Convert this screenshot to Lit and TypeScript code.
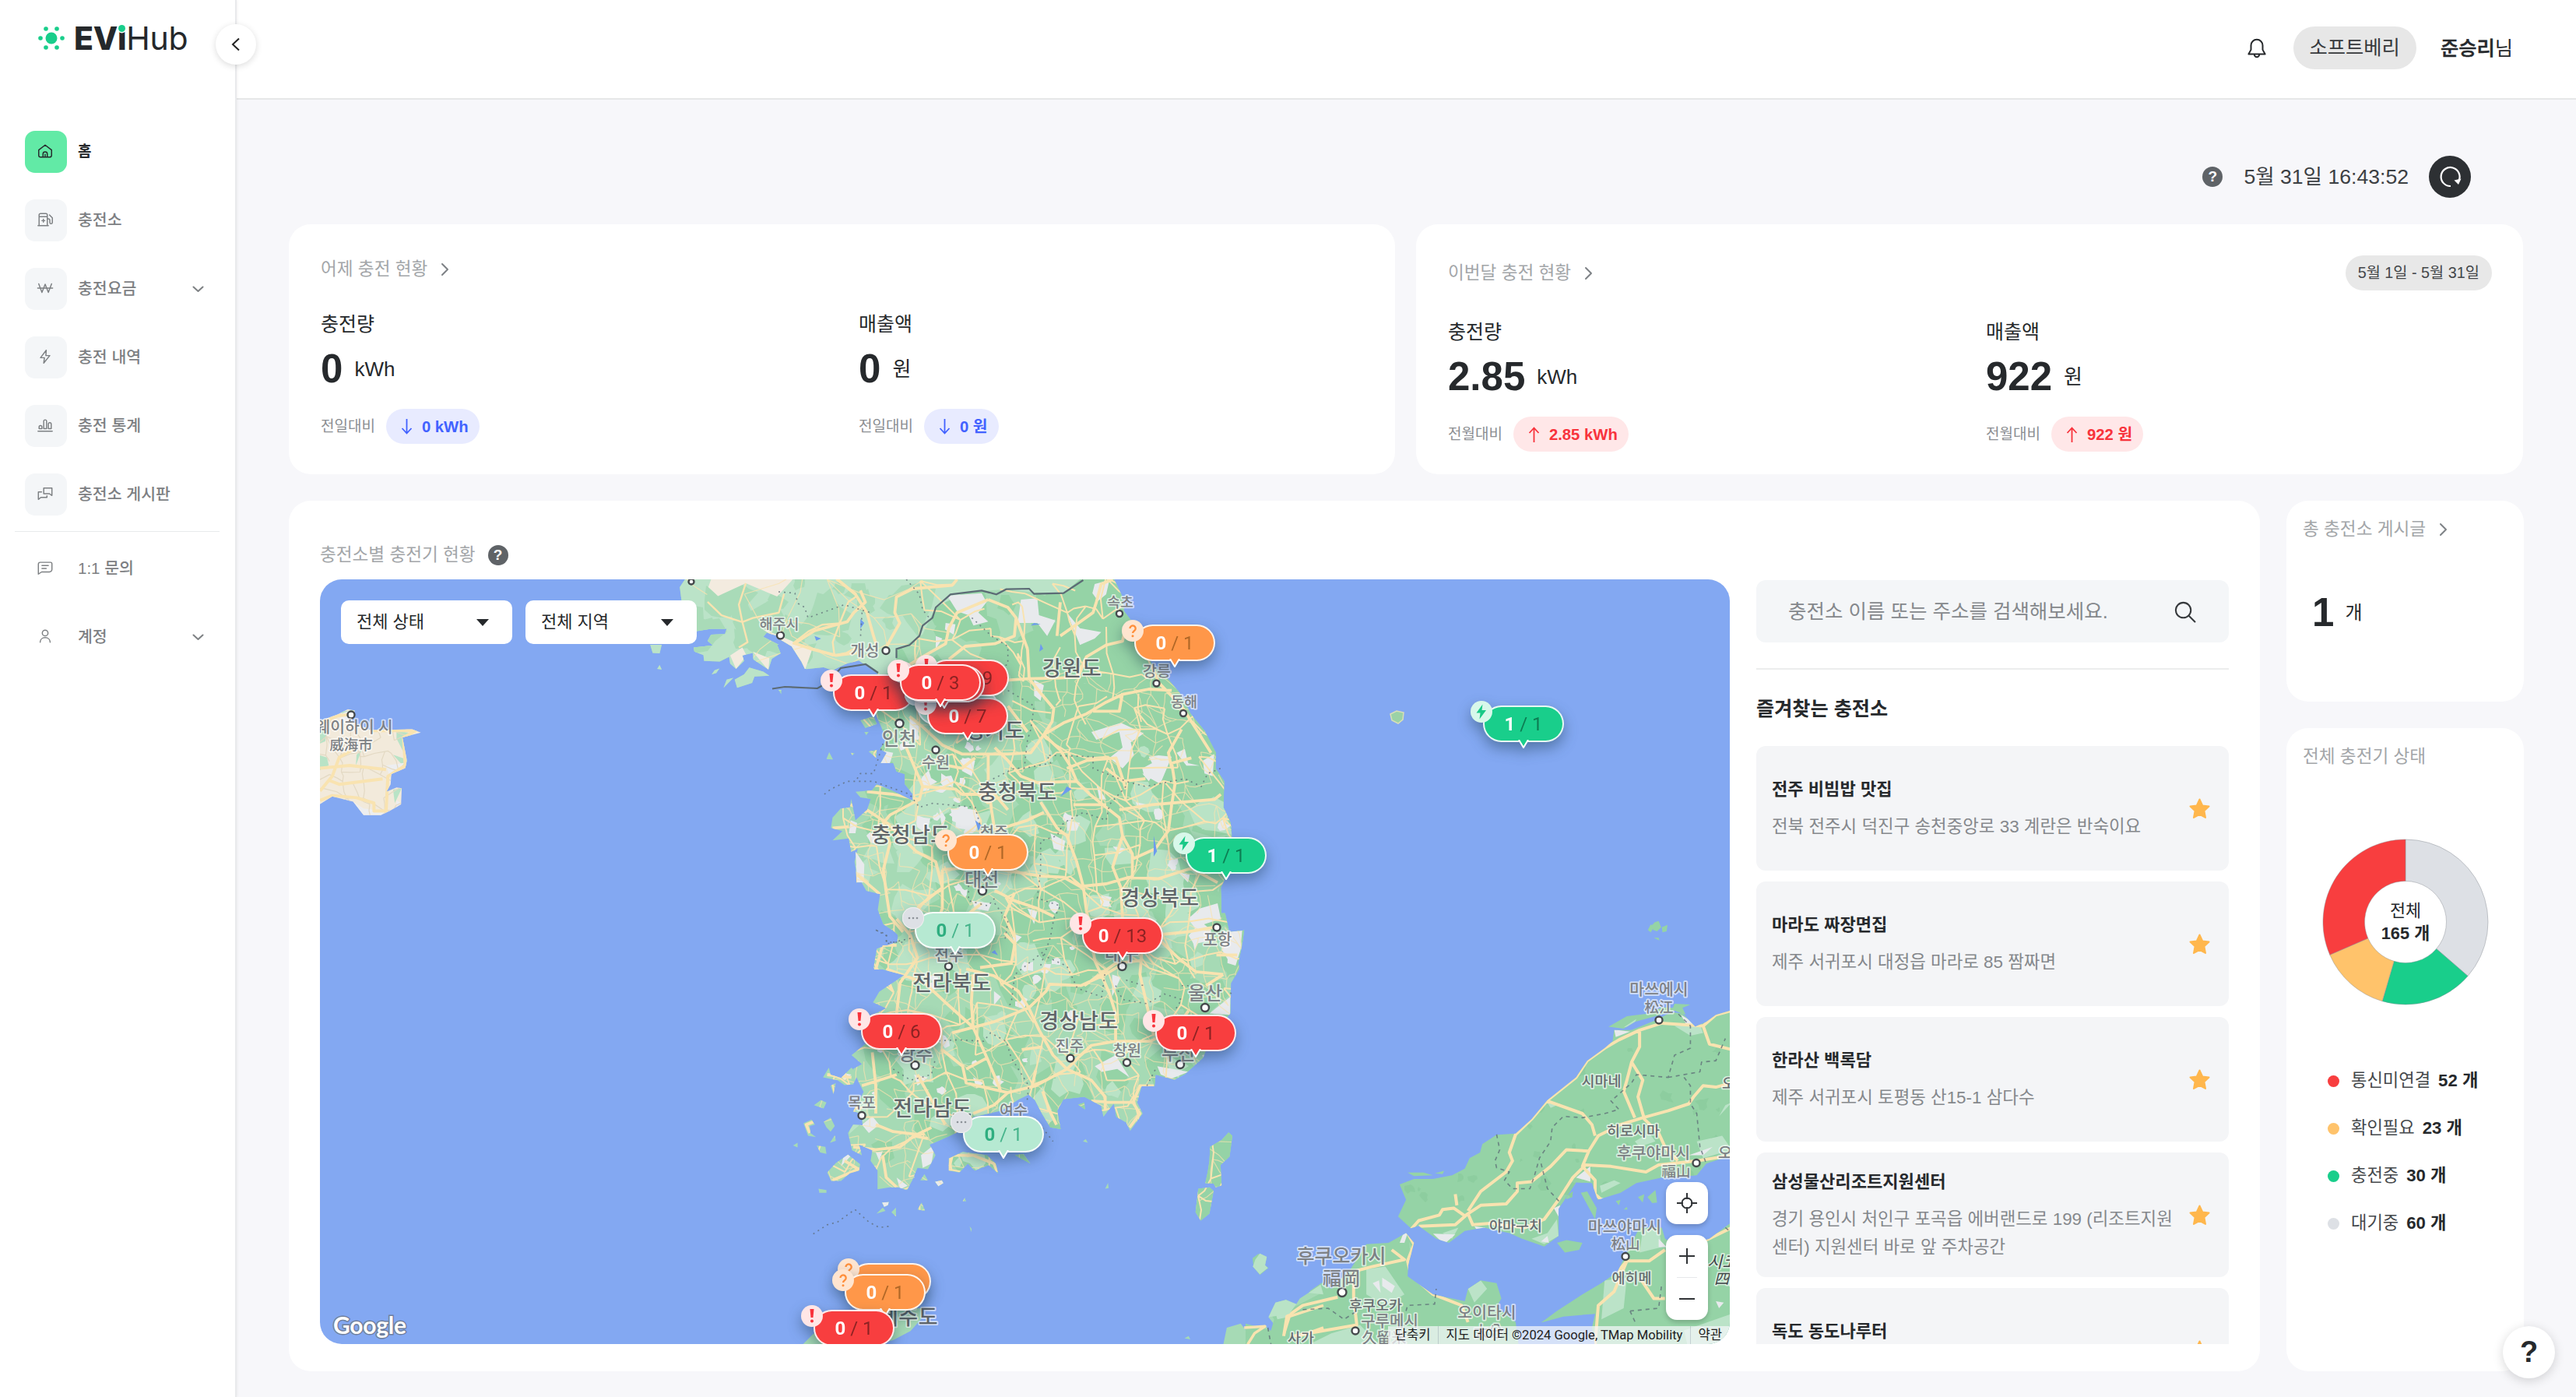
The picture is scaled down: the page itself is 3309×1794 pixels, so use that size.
import { LitElement, html, css, svg } from "lit";
import { customElement } from "lit/decorators.js";

const stroke = (d: string, vb = "0 0 24 24", w = 1.6) =>
  html`<svg class="ico" viewBox=${vb} fill="none" stroke="currentColor" stroke-width=${w} stroke-linecap="round" stroke-linejoin="round"><path d=${d} /></svg>`;

const I = {
  home: "M3 10.500L12 3.500l9 7V18a2.500 2.500 0 0 1-2.500 2.500H5.500A2.500 2.500 0 0 1 3 18zM9 20.500V16a3 3 0 0 1 6 0v4.500M12 16.500v4",
  station: "M3.500 20.500V5.500a2 2 0 0 1 2-2H13a2 2 0 0 1 2 2v15M2 20.500h14.500M3.500 8H15M9.500 11.500v4M7.500 13.500h4M15 11h1.500a2 2 0 0 1 2 2v3a1.800 1.800 0 0 0 3.600 0V9.500L18 5.500",
  won: "M3 6l4.500 12L12 6.500 16.500 18 21 6M1.500 12h21",
  bolt: "M13.500 3L5.500 13.500h5.500L10 21l8.500-10.500H13z",
  stats: "M2 20.500h20M3.500 17v-2.500a2 2 0 0 1 4 0V17zM10 17V6.500a2 2 0 0 1 4 0V17zM16.500 17v-6.500a2 2 0 0 1 4 0V17z",
  board: "M10 4h11.500v10.500l-3.500-2.500h-8zM7 9.500H2.500V20l3.500-2.800h8.500V15",
  chat: "M5 4.500h14.500a2 2 0 0 1 2 2v8a3.500 3.500 0 0 1-3.500 3.500H7l-4.500 3V7A2.500 2.500 0 0 1 5 4.500zM7.500 9h9M7.500 13h6",
  user: "M12 11.500a4 4 0 1 0 0-8 4 4 0 0 0 0 8zM5 20.500c0-4 3-6.500 7-6.500s7 2.500 7 6.500",
};

const NAV = [
  { icon: I.home, label: "홈", active: true },
  { icon: I.station, label: "충전소" },
  { icon: I.won, label: "충전요금", more: true },
  { icon: I.bolt, label: "충전 내역" },
  { icon: I.stats, label: "충전 통계" },
  { icon: I.board, label: "충전소 게시판" },
];
const NAV2 = [
  { icon: I.chat, label: "1:1 문의" },
  { icon: I.user, label: "계정", more: true },
];

const FAVORITES = [
  ["전주 비빔밥 맛집", "전북 전주시 덕진구 송천중앙로 33 계란은 반숙이요"],
  ["마라도 짜장면집", "제주 서귀포시 대정읍 마라로 85 짬짜면"],
  ["한라산 백록담", "제주 서귀포시 토평동 산15-1 삼다수"],
  ["삼성물산리조트지원센터", "경기 용인시 처인구 포곡읍 에버랜드로 199 (리조트지원센터) 지원센터 바로 앞 주차공간"],
  ["독도 동도나루터", ""],
];

const STATUS = [
  { label: "통신미연결", count: 52, color: "#f83e3f" },
  { label: "확인필요", count: 23, color: "#ffc36b" },
  { label: "충전중", count: 30, color: "#19ce8b" },
  { label: "대기중", count: 60, color: "#dde0e5" },
];

type Kind = "red" | "orange" | "green" | "mint";
const MARKERS: [number, number, Kind, string, string][] = [
  [1457, 802, "orange", "0", "1"],
  [1905, 906, "green", "1", "1"],
  [1070, 866, "red", "0", "1"],
  [1178, 884, "mint", "0", "1"],
  [1191, 896, "red", "0", "7"],
  [1192, 847, "red", "0", "39"],
  [1161, 855, "red", "0", "2"],
  [1156, 853, "red", "0", "3"],
  [1217, 1071, "orange", "0", "1"],
  [1523, 1075, "green", "1", "1"],
  [1175, 1171, "mint", "0", "1"],
  [1390, 1178, "red", "0", "13"],
  [1106, 1301, "red", "0", "6"],
  [1484, 1303, "red", "0", "1"],
  [1237, 1433, "mint", "0", "1"],
  [1092, 1622, "orange", "0", "1"],
  [1085, 1636, "orange", "0", "1"],
  [1045, 1682, "red", "0", "1"],
];

// [text, centre x, centre y, size, class]
const LABELS: [string, number, number, number, string][] = [
  ["강원도", 1377, 858, 27, "prov"], ["경기도", 1278, 938, 27, "prov"],
  ["충청북도", 1307, 1017, 27, "prov"], ["충청남도", 1170, 1072, 27, "prov"],
  ["경상북도", 1490, 1153, 27, "prov"], ["전라북도", 1223, 1262, 27, "prov"],
  ["경상남도", 1386, 1311, 27, "prov"], ["전라남도", 1198, 1423, 27, "prov"],
  ["제주도", 1167, 1691, 27, "prov"],
  ["속초", 1439, 773, 18.5, "city"], ["강릉", 1486, 862, 19.5, "city"],
  ["동해", 1521, 901, 18.5, "city"], ["개성", 1111, 836, 20, "city"],
  ["해주시", 1001, 801, 18.5, "city"], ["인천", 1155, 948, 24, "city"],
  ["수원", 1202, 979, 19.5, "city"], ["청주", 1277, 1069, 19.5, "city"],
  ["대전", 1261, 1129, 24, "city"], ["포항", 1564, 1207, 20, "city"],
  ["전주", 1219, 1227, 20, "city"], ["대구", 1441, 1224, 24, "city"],
  ["울산", 1548, 1275, 24, "city"], ["진주", 1374, 1343, 19.5, "city"],
  ["창원", 1448, 1349, 19.5, "city"], ["부산", 1514, 1352, 24, "city"],
  ["광주", 1176, 1353, 24, "city"], ["목포", 1107, 1416, 19.5, "city"],
  ["여수", 1302, 1426, 19.5, "city"],
  ["웨이하이 시", 455, 934, 20.5, "city"], ["威海市", 451, 956, 18.5, "city"],
  ["후쿠오카시", 1723, 1613, 25, "city"], ["福岡", 1723, 1641, 24, "city"],
  ["후쿠오카", 1767, 1676, 18.5, "pref"], ["구루메시", 1785, 1697, 20, "city"],
  ["久留米", 1778, 1718, 19, "city"], ["사가", 1671, 1718, 18.5, "pref"],
  ["오이타시", 1910, 1686, 20.5, "city"], ["大分", 1912, 1710, 19, "city"],
  ["야마구치", 1947, 1574, 18.5, "pref"], ["시마네", 2057, 1388, 18.5, "pref"],
  ["히로시마", 2098, 1452, 18.5, "pref"], ["마쓰에시", 2131, 1271, 20.5, "city"],
  ["松江", 2131, 1293, 18.5, "city"], ["후쿠야마시", 2124, 1481, 20.5, "city"],
  ["福山", 2153, 1504, 18.5, "city"], ["마쓰야마시", 2087, 1576, 20.5, "city"],
  ["松山", 2088, 1597, 18.5, "city"], ["에히메", 2096, 1641, 18.5, "pref"],
  ["오카야마시", 2254, 1481, 20.5, "city"], ["오카야마", 2246, 1391, 18.5, "pref"],
  ["시코쿠", 2222, 1620, 21, "isle"], ["四国", 2221, 1642, 19, "isle"],
];
const DOTS: [number, number, number][] = [
  [1438, 788, 4], [1485.5, 877.5, 4], [1520, 916, 4], [1138, 835.5, 4.5], [1002.5, 816, 4.5],
  [1155.5, 929, 5], [1202, 963, 4.5], [1262, 1144, 5], [1563, 1191, 4.5], [1218.5, 1241, 4.5],
  [1441.5, 1241, 5], [1548, 1294, 5], [1375, 1359, 4.5], [1447.5, 1364.5, 4.5], [1516, 1367, 5],
  [1175.5, 1368, 5], [1107, 1432.5, 4.5], [451, 918, 4.5], [1724, 1659.5, 5.5], [1741, 1709, 4.5],
  [2131, 1310, 4.5], [2179, 1493.5, 4.5], [2088, 1613.5, 4.5], [888, 747, 3.5],
];

const T_NW = "translate(400 680) scale(.44643 .34438)";
const T_N = "translate(1000 720) scale(.42092 .33333)";
const T_S = "translate(1000 1180) scale(.44643 .35714)";
const T_SE = "translate(1600 1180) scale(.40816 .35714)";

const LAND_NW =
  "M1078 180L1060 215 1065 265 1060 300 1090 330 1105 380 1150 370 1195 370 1190 390 1150 392 1140 415 1155 432 1100 440 1102 455 1128 468 1130 490 1175 492 1202 475 1205 500 1222 520 1245 490 1240 470 1270 460 1272 485 1315 522 1325 482 1350 462 1340 430 1345 430 1300 400 1310 385 1350 400 1385 425 1420 520 1470 512 1500 525 1540 500 1600 480V160Z M975 430L1008 430 1002 462 982 460Z M995 520L1002 505 1008 522Z M1186 590L1195 560 1214 553ZM1152 540L1160 525 1174 518 1165 535ZM1218 560L1245 540 1260 515 1300 530 1318 545 1275 548 1268 572 1225 590ZM1482 855L1490 830 1500 858ZM1344 598L1352 598 1352 614Z";
const WEIHAI = "M20 715L75 690 105 670 125 675 115 715 170 748 290 745 315 757 262 775 275 860 270 890 230 912 228 950 216 978 245 962 260 965 258 1025 225 1050 200 1065 150 1065 120 1015 60 995 20 1028Z";
const LAND_N =
  "M0 60H1020L1050 140 1055 195 1082 240 1108 320 1140 400 1190 458 1225 510 1258 590 1300 655 1335 740 1334 800 1360 850 1358 950 1380 1010 1385 1080 1372 1200 1350 1260 1352 1360 1370 1430 1420 1425 1415 1480 1400 1570H290L300 1495 380 1462 355 1430 320 1400 303 1345 310 1285 268 1272 240 1210 232 1160 242 1110 222 1122 214 1070 165 1078 195 1042 160 1030 165 990 190 955 218 950 222 918 235 1000 270 960 282 918 250 912 235 890 285 885 300 862 350 888 410 925 410 900 385 860 385 822 360 812 350 780 312 780 330 740 310 725 330 690 300 600 290 540 330 470 300 432 240 380 190 402 130 412 85 418 60 370 40 330 0 300Z M250 615L290 600 300 630 265 645ZM262 660L275 660 268 672ZM148 765L155 738 166 765ZM275 735L300 730 298 760ZM220 740L232 742 226 750Z M235 1120L255 1160 265 1240 238 1240Z";
const LAND_S =
  "M320 -20L1285 -20 1300 62 1340 40 1334 95 1320 130 1326 180 1302 232 1300 340 1272 380 1240 440 1222 500 1170 558 1140 578 1085 560 1082 602 1045 602 1032 660 1048 700 1012 762 1000 732 972 712 965 665 948 690 935 712 928 672 880 640 820 648 802 690 812 756 782 750 758 700 738 652 720 632 690 650 640 690 560 712 540 752 490 782 435 812 452 850 430 900 400 895 385 940 370 975 345 965 320 965 285 972 285 905 265 870 270 832 232 812 240 850 212 832 200 770 215 740 242 742 240 700 215 692 245 622 230 585 215 540 240 522 210 490 260 440 262 350 310 322 272 300 290 262 362 202 300 182 275 182 300 95 340 95 345 50Z M140 912L165 878 200 848 235 882 232 905 205 915 180 942 152 942Z M490 862L530 838 600 850 625 880 632 915 605 885 565 905 545 880 520 912 490 905ZM680 850L705 845 725 880Z M128 570L145 535 150 560 180 572 210 535 228 560 215 595 190 598 170 580ZM150 600L165 590 158 630ZM102 670L122 652 138 660 130 682ZM72 735L95 722 105 740 90 745 92 770 108 785 85 780ZM130 730L150 715 162 745 150 765 138 750ZM110 815L135 820 138 845 120 840ZM42 815L55 805 55 822ZM148 805L162 778 165 798ZM115 970L138 975 138 985 118 985ZM370 935L380 905 392 930ZM408 940L420 918 430 940ZM400 1045L412 1020 422 1050ZM282 1060L300 1038 308 1050ZM325 1055L338 1038 338 1070ZM550 1105L556 1115 554 1126ZM530 1015L536 1003 540 1016ZM940 970L948 950 950 968Z M862 668L880 660 882 685ZM1015 625L1020 590 1028 640ZM876 800L884 792 890 805Z M1242 820L1275 795 1295 768 1306 780 1298 855 1272 885 1275 958 1258 965 1252 952 1228 950 1235 910 1240 870ZM1208 970L1240 965 1252 978 1240 1060 1215 1085 1200 1055ZM1372 1225L1385 1203 1405 1215 1400 1245 1408 1255 1385 1278 1365 1250Z M1280 1530L1290 1470 1330 1455 1345 1480 1400 1460 1440 1530ZM1168 1508L1180 1500 1185 1512ZM1410 1432L1430 1380 1460 1370 1490 1385 1500 1365 1568 1310V1530H1500L1440 1480Z M70 1530L150 1430 300 1400 415 1400 410 1440 380 1482 330 1515 250 1540Z M450 945L470 940 475 950 460 962ZM298 1020L318 1018 315 1030 304 1036Z";
const LAND_SE =
  "M1530 328L1480 345 1450 370 1415 388 1375 340 1340 335 1290 365 1215 400 1160 400 1155 440 1130 465 1075 510 1040 570 950 652 900 720 850 772 790 776 745 810 738 840 705 860 690 898 650 922 590 935 530 935 485 955 505 1010 480 1070 520 1112 545 1104 600 1150 640 1165 690 1122 750 1110 830 1130 870 1150 940 1178 985 1140 985 1042 1010 1000 1040 948 1090 950 1108 1010 1180 985 1230 950 1310 930 1420 922 1450 880 1530 850Z M1142 388L1200 350 1270 340 1310 318 1345 320 1350 305 1400 308 1375 320 1385 345 1350 330 1290 350 1225 370 1190 395ZM510 912L560 912 590 922 530 925ZM596 915L625 906 620 918Z M1008 1000L1030 980 1028 1000 1010 1008ZM1055 985L1075 980 1105 1040 1100 1080ZM980 1165L1010 1155 1060 1165 1050 1190 1005 1200ZM1165 1015L1180 1010 1175 1030ZM1235 1000L1255 990 1250 1020ZM1265 1000L1290 975 1295 1020 1280 1022ZM1190 1045L1200 1035 1202 1045Z M505 1130L530 1165 512 1245 510 1285 590 1350 690 1375 700 1330 740 1300 790 1310 805 1365 790 1395 850 1450 860 1540H0V1455L80 1480 90 1440 78 1420 130 1370 145 1400 240 1345 200 1340 240 1308 270 1330 330 1260 380 1170 450 1165Z M22 1220L40 1205 65 1215 60 1245 72 1255 45 1280 25 1250Z M1530 1090L1460 1150 1370 1180 1320 1150 1310 1110 1240 1110 1200 1200 1170 1270 1120 1310 1060 1350 980 1410 930 1452 1000 1430 1100 1420 1090 1470 1100 1540H1530Z M1266 40L1275 20 1288 25 1275 48 1285 58ZM1278 24L1288 12 1300 8 1308 30 1295 45 1283 40ZM1310 30L1328 22 1325 45 1312 48ZM1285 68L1300 68 1302 78Z";

const ROADS_N =
  "M180 72L235 130 270 200 290 290 300 330 M545 72L530 95 410 108 360 140 355 200 370 240 330 330 M50 318L110 270 210 235 230 200 265 160 250 115 M50 318L100 340 175 365 240 355 M1020 72L985 90 970 160 960 200 905 250 860 290 M640 150L700 180 725 220 720 290 660 320 570 330 520 380 M640 150L545 200 520 260 510 320 440 370 400 400 M700 460L760 455 860 452 910 448 940 370 1000 325 1050 310 1060 250 M760 340L765 455 800 510 840 570 835 620 810 670 770 740 700 745 560 745 500 710 440 640 400 600 M810 670L870 625 940 590 1000 545 1050 515 1130 495 1200 500 M810 670L860 730 890 790 910 850 950 900 1000 950 1040 990 1050 1060 1080 1130 1080 1220 M1140 400L1160 470 1230 560 1270 640 1320 740 M910 850L790 855 740 830 700 770 660 720 M560 745L640 745 640 850 650 960 660 1040 M380 690L410 780 440 870 430 920 340 980 320 1010 340 1090 320 1190 330 1290 340 1370 380 1430 M440 870L540 880 560 900 660 900 700 960 M430 920L350 900 270 890 M270 960L330 1010 420 1120 480 1160 500 1260 430 1330 400 1390 M500 1190L620 1180 700 1195 800 1215 870 1220 920 1255 1000 1245 1070 1220 1160 1225 1260 1185 1340 1240 M800 930L850 1030 880 1060 910 1160 930 1255 940 1350 960 1450 M600 760L560 800 520 790 M540 620L510 560 430 450 M1050 1060L1020 1180 1045 1260 1050 1380 M1200 940L1210 860 1200 780 1260 760 M900 940L1000 940 M1040 960L1140 940 1330 920 1350 900 M1200 940L1190 1040 1150 1110 1080 1150 M1170 1440L1250 1430 1340 1410 M500 1190L500 1340 470 1440 M660 1270L720 1310 790 1340 840 1370 M620 1320L560 1380 540 1480 M660 1040L760 1000 810 970 M725 220L760 340 M860 160L850 290 M700 560L760 660 M1060 880L1030 760 940 770 880 800 M960 580L1040 580 1050 510 M1120 840L1050 850 1000 800 M720 1450L690 1370 720 1280 M1230 650L1190 740 1200 800 M165 1030L215 1025 M220 940L270 970 M240 1210L310 1285";
const ROADS_S =
  "M340 0L380 60 400 140 350 230 340 340 M540 180L620 205 690 260 720 320 700 330 620 370 500 410 M720 320L750 400 790 490 830 540 900 580 940 640 940 690 M830 540L740 600 660 625 590 605 540 590 530 530 470 470 M660 625L620 670 560 700 M650 50L680 90 670 160 580 175 M560 200L555 300 560 390 600 500 640 620 M720 320L770 260 780 235 870 240 940 200 980 170 M900 60L910 150 950 260 970 340 970 440 M970 440L900 455 870 490 830 540 M1050 60L1040 200 1060 310 1080 420 M970 440L1070 440 1140 400 1180 330 M1100 80L1150 140 1200 190 1280 200 M1260 130L1320 130 M1280 200L1230 240 M240 600L340 560 M270 480L280 600 280 700 M280 740L330 765 400 775 440 750 M400 560L440 650 480 740 M215 820L280 830 350 820 390 780 430 790 M300 850L310 930 340 965 M190 870L230 900 155 940 M490 900L500 850 560 850 620 880 630 910 M760 620L780 690 800 740 M1080 600L1040 600 1020 660 960 660 900 655 M1020 660L1040 700 1010 750 M240 180L280 180 300 95 340 95 M140 560L210 570 M135 700L160 680 240 680 M100 730L80 740 90 770 M740 545L730 600 M880 240L970 160 1040 150 M560 390L500 410 M600 500L540 540 M760 460L700 470 M310 180L420 230 480 300 560 390";
const ROADS_SE =
  "M1530 330L1480 345 1440 385 1310 375 1240 400 1175 435 1130 465 1075 510 1040 570 950 652 900 720 850 775 830 840 840 870 820 910 740 980 700 1050 M510 1130L545 1085 610 1065 620 1045 655 1040 690 1068 740 1030 820 1025 855 980 855 950 900 945 960 890 1010 830 1080 835 1110 780 1180 740 1250 715 1330 690 1395 665 1410 640 1440 600 1480 605 1530 590 M1240 400L1240 460 1215 515 1250 580 1235 640 1255 720 1300 770 1320 820 1360 870 M1215 515L1200 580 1190 620 1225 715 M545 1105L660 1100 700 1060 715 1100 770 1095 880 1110 940 1080 985 1010 1030 930 1070 885 1150 890 1260 910 1300 885 1420 870 1530 850 M1440 385L1460 450 1530 470 M1080 835L1060 890 1100 940 1100 990 1120 1010 M950 655L1060 700 1090 740 1100 780 M510 1130L530 1170 510 1230 520 1280 590 1350 680 1390 700 1450 M350 1265L400 1250 500 1225 460 1190 M340 1270L340 1360 350 1460 250 1480 150 1500 M290 1360L180 1390 130 1430 120 1500 M1170 1270L1200 1230 1270 1230 1320 1190 M1200 1230L1160 1340 1110 1390 1100 1530 M1530 1110L1450 1155 M1320 1365L1285 1365 1240 1290 M660 990L665 1030 M1300 1060L1310 990";
const DASH_SE =
  "M790 775L800 830 785 870 790 895 830 910 815 940 840 970 895 970 910 920 925 860 960 800 965 750 1000 710 1060 715 1130 700 1175 685 1150 655 1215 590 1230 560 1330 570 1350 490 1400 465 1400 385 1360 340 M1330 570L1430 550 1435 515 1480 510 1510 430 M1380 570L1400 600 1400 665 1420 700 1430 820 1450 880 M930 880L950 970 990 1020 M180 1405L260 1400 310 1440 350 1410 M505 1410L510 1390 595 1385 600 1330 M1210 1410L1300 1400 1310 1310 M1210 1410L1230 1460 M70 1470L80 1530 M1510 1110L1530 1130";
const DASH_N =
  "M0 120L50 125 60 165 80 180 90 220 200 170 280 200 M390 72L430 130 440 190 460 220 M255 200L250 300 M590 220L650 290 700 330 700 400 640 430 M700 500L780 560 770 650 760 690 750 800 830 780 820 750 960 755 960 800 1060 850 1120 870 1160 860 1240 840 1290 870 1310 820 1360 795 M140 900L160 880 210 850 290 850 400 900 430 950 470 935 600 950 620 1040 M640 850L720 800 750 800 M1060 870L1010 940 1000 1000 930 970 870 1010 850 1060 800 1080 800 1190 790 1300 860 1330 840 1380 830 1450 800 1560 M660 1320L700 1390 690 1470 M300 1425L330 1440 330 1470 380 1470 M240 840L250 820 290 820 320 700 M580 1210L580 1310 640 1330 660 1300";
const DASH_S =
  "M100 1133L140 1100 170 1090 220 1045 260 1090 290 1110 320 1105 M760 120L680 200 670 300 660 320 M760 130L830 170 860 250 930 280 940 190 M430 440L520 435 590 440 610 410 655 440 670 500 720 600 715 660 M970 240L990 290 1060 305 1110 270 1160 290 1140 330 M740 720L790 800 M330 540L380 580 440 560 450 510 M280 40L310 60 310 90 380 70 M1300 265L1310 280 M1160 240L1180 240 M1060 600L1085 540 M1000 220L1050 240";
const GREY_N =
  "M515 135L620 125 635 160 610 200 640 235 595 250 580 210 545 195ZM740 150L790 145 795 210 845 230 820 290 790 240 730 240ZM965 90L1010 75 1000 130 975 155 958 125ZM880 200L920 260 985 275 965 300 920 325ZM510 240L540 245 535 285 508 265ZM955 660L1045 625 1115 665 1075 700 1085 750 1050 800 1010 760 1050 720 1040 660 970 690ZM1110 800L1140 780 1130 755 1160 750 1200 755 1165 860 1115 825ZM1215 740L1240 725 1250 780 1285 790 1245 790ZM1295 770L1330 745 1325 830 1300 820ZM545 950L600 960 620 1000 600 1040 540 1030ZM830 1050L875 1080 870 1120 840 1110ZM880 1000L920 1010 910 1040 880 1040ZM1285 1340L1340 1320 1350 1380 1300 1400 1280 1430 1250 1380ZM1375 1430L1415 1425 1410 1500 1395 1560 1370 1550ZM590 1310L650 1320 640 1350 600 1340ZM560 760L600 770 590 830 560 810ZM780 460L810 480 800 540 780 520ZM310 730L350 740 340 780 310 780ZM235 1120L262 1170 260 1240 240 1240ZM220 1000L240 1010 235 1050 215 1050ZM1090 930L1125 940 1100 960ZM970 860L1000 920 980 920ZM760 1340L790 1350 780 1400ZM480 290L500 300 480 340ZM490 950L510 990 500 1040ZM610 880L640 870 660 920ZM1220 1200L1255 1210 1250 1240ZM400 600L430 640 420 700 400 660ZM820 430L830 440 810 450ZM1260 1440L1290 1450 1270 1500ZM1110 820L1140 830 1130 850ZM1020 1100L1060 1110 1040 1130Z";
const GREY_S =
  "M1180 60L1215 10 1245 40 1240 80 1195 90ZM1280 40L1320 70 1300 160 1275 110ZM910 530L970 490 1010 570 975 540 930 550ZM1090 530L1180 550 1130 575 1100 560ZM1240 340L1300 280 1300 345ZM240 740L270 710 290 740 260 770ZM410 850L450 810 440 880 415 895ZM280 840L300 835 290 870ZM170 550L210 560 190 580ZM560 570L590 590 570 610ZM450 945L470 940 475 950 460 962ZM298 1020L318 1018 315 1030 304 1036ZM390 560L430 570 400 600ZM670 50L700 65 680 90ZM960 200L985 210 960 280ZM620 260L640 280 620 310ZM430 200L460 210 450 240ZM190 840L210 850 180 890ZM340 930L372 960 350 972Z";
const GREY_SE =
  "M1160 398L1210 405 1165 425ZM1370 345L1415 375 1390 385ZM590 1132L660 1135 625 1170ZM1040 930L1085 890 1085 945ZM430 1290L470 1320 460 1345 430 1320ZM400 1310L420 1300 425 1345ZM720 1105L755 1110 730 1122ZM1300 1150L1325 1180 1300 1180ZM500 1120L510 1130 500 1165 485 1165ZM1395 850L1470 820 1440 850ZM1115 1000L1140 1010 1115 1020ZM930 1160L950 1140 955 1165ZM970 1040L990 1030 985 1070ZM1480 1375L1505 1380 1490 1400Z";
const LIGHT_SE =
  "M1350 385L1430 380 1440 410 1400 420ZM1225 800L1270 770 1290 800 1240 820ZM620 1130L670 1110 650 1150ZM380 1260L440 1250 500 1350 440 1390 380 1350ZM700 1330L740 1300 760 1330 720 1380ZM90 1400L130 1375 140 1430 100 1440ZM1130 1300L1200 1290 1190 1400 1120 1440ZM900 1150L950 1130 980 1080 985 1140 940 1170ZM1115 960L1160 940 1180 950 1120 985ZM515 1160L540 1280 580 1320 530 1290ZM1420 800L1500 780 1530 830 1440 860ZM950 660L990 665 960 680ZM1490 710L1510 670 1530 660ZM1190 390L1230 360 1220 385ZM270 1490L360 1460 420 1530 200 1530ZM1380 1480L1530 1420 1530 1530 1390 1530ZM1250 1120L1300 1110 1310 1180 1240 1200Z";
const NORTH_BORDER = "M360 375L360 340 400 325 430 290 440 250 470 220 480 180 525 130 620 115 665 130 695 110 765 108 780 128 870 125 930 75";

function seeded(seed: number) {
  let s = seed;
  return () => ((s = (s * 1664525 + 1013904223) % 4294967296) / 4294967296);
}

// Fine road mesh: jittered lattice with most neighbours joined.
function mesh(x0: number, y0: number, x1: number, y1: number, step: number, seed: number, keep: number) {
  const r = seeded(seed);
  const cols = Math.ceil((x1 - x0) / step), rows = Math.ceil((y1 - y0) / step);
  const p: number[][][] = [];
  for (let j = 0; j <= rows; j++) {
    p.push([]);
    for (let i = 0; i <= cols; i++) p[j].push([x0 + (i + (r() - 0.5) * 0.9) * step, y0 + (j + (r() - 0.5) * 0.9) * step]);
  }
  let d = "";
  const join = (a: number[], b: number[]) => {
    const mx = (a[0] + b[0]) / 2 + (r() - 0.5) * step * 0.3, my = (a[1] + b[1]) / 2 + (r() - 0.5) * step * 0.3;
    d += `M${a[0].toFixed(1)} ${a[1].toFixed(1)}L${mx.toFixed(1)} ${my.toFixed(1)} ${b[0].toFixed(1)} ${b[1].toFixed(1)}`;
  };
  for (let j = 0; j < rows; j++)
    for (let i = 0; i < cols; i++) {
      if (r() < keep) join(p[j][i], p[j][i + 1]);
      if (r() < keep) join(p[j][i], p[j + 1][i]);
      if (r() < keep * 0.25) join(p[j][i], p[j + 1][i + 1]);
    }
  return d;
}

// Irregular terrain patches scattered over a rectangle.
function patches(x0: number, y0: number, x1: number, y1: number, n: number, rad: number, seed: number) {
  const r = seeded(seed);
  let d = "";
  for (let k = 0; k < n; k++) {
    const cx = x0 + r() * (x1 - x0), cy = y0 + r() * (y1 - y0), rr = rad * (0.35 + r());
    for (let a = 0; a < 9; a++) {
      const q = rr * (0.45 + r() * 0.75), t = (a / 9) * Math.PI * 2;
      d += `${a ? "L" : "M"}${(cx + Math.cos(t) * q).toFixed(0)} ${(cy + Math.sin(t) * q).toFixed(0)}`;
    }
    d += "Z";
  }
  return d;
}

const BADGE: Record<Kind, any> = {
  red: svg`<path d="M11.500 5h5l-1 11h-3z" fill="#f8333c"/><circle cx="14" cy="20.500" r="2" fill="#f8333c"/>`,
  orange: svg`<path d="M10.500 11a3.600 3.600 0 1 1 5.600 3c-1.300.9-2 1.500-2 3" fill="none" stroke="#ff8f3c" stroke-width="2.400"/><circle cx="14" cy="20.800" r="1.500" fill="#ff8f3c"/>`,
  green: svg`<path d="M15.500 4.500L7.500 15.500h5l-1 8 8.500-11.500h-5.500z" fill="#19c987"/>`,
  mint: svg`<g fill="#8d9298"><circle cx="9" cy="14" r="1.300"/><circle cx="14" cy="14" r="1.300"/><circle cx="19" cy="14" r="1.300"/></g>`,
};

@customElement("station-map")
class StationMap extends LitElement {
  static styles = css`
    :host { display: block; position: relative; width: 1811px; height: 982px; border-radius: 28px; overflow: hidden; background: #83a8f2; font-family: "Liberation Sans", "Noto Sans CJK KR", sans-serif; color: #26292c; }
    .canvas { display: block; width: 1811px; height: 982px; }
    .road { fill: none; stroke: #f9e3b0; stroke-linejoin: round; vector-effect: non-scaling-stroke; }
    .dash { fill: none; stroke: #5c6b75; stroke-opacity: .75; stroke-width: 1.6; stroke-dasharray: 2 5; vector-effect: non-scaling-stroke; }
    .dash2 { stroke-dasharray: 5 5; }
    .border { fill: none; stroke: #5c6b75; stroke-width: 2.2; vector-effect: non-scaling-stroke; }
    .lbl { font-family: Roboto, "Noto Sans CJK KR", sans-serif; text-anchor: middle; paint-order: stroke; stroke: rgba(255,255,255,.65); stroke-width: 3.4px; stroke-linejoin: round; }
    .prov { fill: #5f6468; font-weight: 500; letter-spacing: .5px; }
    .city { fill: #7d8185; font-weight: 500; }
    .pref { fill: #666b6f; font-weight: 500; }
    .isle { fill: #3f4549; font-style: italic; }
    .google { font: 700 30px Lato, sans-serif; fill: #fff; paint-order: stroke; stroke: #6f7f9c; stroke-width: 3px; }
    .filters { position: absolute; left: 27px; top: 27px; display: flex; gap: 17px; }
    .filter { width: 220px; height: 56px; box-sizing: border-box; padding: 0 30px 0 20px; background: #fff; border-radius: 10px; display: flex; align-items: center; justify-content: space-between; font-size: 22px; line-height: 32px; }
    .caret { width: 0; border: 8px solid transparent; border-top: 9px solid #26292c; border-bottom: 0; }
    .marker { position: absolute; width: 104px; height: 47px; filter: drop-shadow(0 8px 9px rgba(20,50,70,.42)); }
    .body { width: 104px; height: 47px; box-sizing: border-box; border: 2.5px solid rgba(255,255,255,.9); border-radius: 24px; display: flex; align-items: center; justify-content: center; gap: 6px; font: 400 24px/40px Roboto, sans-serif; color: rgba(40,10,10,.52); }
    .body b { color: #fff; }
    .red .body { background: #f83e3f; } .orange .body { background: #ff9749; color: rgba(90,50,0,.48); } .green .body { background: #19ce8b; color: rgba(0,50,30,.52); }
    .mint .body { background: #b6e9d2; color: #46b48b; } .mint b { color: #2fae80; }
    .tip { position: absolute; left: 45px; top: 44px; width: 14px; height: 11px; }
    .badge { position: absolute; left: -16px; top: -6px; width: 28px; height: 28px; border-radius: 50%; background: #ffe6e6; }
    .orange .badge { background: #ffe5d0; } .green .badge { background: #d8f8ea; } .mint .badge { background: #dde0e5; box-shadow: 0 0 0 1px #eee inset; }
    .controls { position: absolute; left: 1729px; top: 774px; display: flex; flex-direction: column; gap: 14px; }
    .ctl { width: 54px; background: #fff; border-radius: 14px; box-shadow: 0 3px 6px rgba(0,0,0,.2); display: flex; flex-direction: column; align-items: center; justify-content: center; height: 54px; }
    .ctl.zoom { height: 109px; gap: 17px; }
    .sep { width: 26px; height: 1px; background: #e6e8ea; }
    .attr { position: absolute; right: 0; bottom: 0; height: 23px; display: flex; align-items: center; background: rgba(245,247,250,.72); font: 400 16.6px/23px Roboto, "Noto Sans CJK KR", sans-serif; color: #222; white-space: nowrap; }
    .attr span { padding: 0 10px 0 9px; border-left: 1px solid rgba(120,130,150,.3); }
    .attr span:first-child { border: 0; }
  `;

  private marker([x, y, kind, a, b]: (typeof MARKERS)[number]) {
    const fill = { red: "#f83e3f", orange: "#ff9749", green: "#19ce8b", mint: "#b6e9d2" }[kind];
    return html`<div class="marker ${kind}" style="left:${x - 411}px;top:${y - 744}px">
      <div class="body"><b>${a}</b><span>/</span><span>${b}</span></div>
      <svg class="tip" viewBox="0 0 14 11"><path d="M1 0L7 10 13 0" fill=${fill} stroke="#fff" stroke-width="2" /></svg>
      <svg class="badge" viewBox="0 0 28 28">${BADGE[kind]}</svg>
    </div>`;
  }

  render() {
    return html`
      <svg class="canvas" viewBox="411 744 1811 982">
        <defs>
          <clipPath id="korea"><path transform=${T_N} d=${LAND_N} /><path transform=${T_S} d=${LAND_S} /><path transform=${T_NW} d=${LAND_NW} /></clipPath>
          <clipPath id="japan"><path transform=${T_SE} d=${LAND_SE} /></clipPath>
          <clipPath id="china"><path transform=${T_NW} d=${WEIHAI} /></clipPath>
        </defs>
        <g clip-path="url(#korea)">
          <rect x="800" y="740" width="900" height="1000" fill="#a6dab5" />
          <path d=${patches(1120, 760, 1620, 1500, 170, 34, 7)} fill="#95d3a6" />
          <path d=${patches(1360, 740, 1600, 1180, 90, 40, 19)} fill="#95d3a6" />
          <path d=${patches(1100, 960, 1560, 1560, 90, 22, 33)} fill="#b9e3c6" />
          <path d="M800 740H1392L1366 762 1330 761 1292 757 1240 760 1202 780 1185 815 1152 835 1150 860 1110 880 800 900Z" fill="#bbe3c8" />
          <path d=${patches(880, 745, 1180, 850, 26, 26, 5)} fill="#a9dbb8" />
          <path transform=${T_NW} d="M1150 186H1385L1340 250 1250 200 1170 248 1142 215ZM1290 365L1390 420 1440 450 1420 525 1380 440ZM1205 470L1240 440 1252 470 1222 520ZM1270 455L1318 480 1315 525Z" fill="#f3ebdf" />
          <path transform=${T_N} d=${GREY_N} fill="#e8eaed" />
          <path transform=${T_S} d=${GREY_S} fill="#e8eaed" />
          <path d=${patches(1160, 930, 1260, 1060, 14, 10, 41)} fill="#e8eaed" />
          <path d=${patches(1100, 1040, 1590, 1420, 34, 7, 77)} fill="#e8eaed" />
          <path transform=${T_S} d="M1242 760H1310V1100H1190V960Z" fill="#95d3a6" />
          <path d=${mesh(1060, 870, 1620, 1600, 19, 11, 0.62)} class="road" stroke-width="1.200" opacity=".7" />
          <path d=${mesh(1060, 900, 1620, 1600, 40, 91, 0.6)} class="road" stroke-width="2" />
          <path d=${mesh(1190, 750, 1480, 900, 34, 23, 0.5)} class="road" stroke-width="2" />
          <path d=${mesh(880, 750, 1180, 880, 48, 31, 0.55)} class="road" stroke-width="1.200" opacity=".8" />
          <path transform=${T_N} d=${ROADS_N} class="road" stroke-width="3.800" />
          <path transform=${T_S} d=${ROADS_S} class="road" stroke-width="3.800" />
          <path transform=${T_NW} d="M1385 425L1430 380 1470 355 1520 350 1545 270 1568 250M1385 425L1460 450 1500 470 1540 460 1568 440M1520 350L1500 420 1505 470M1510 186L1568 240M1140 270L1180 320 1240 345 1270 330 1345 310 1360 240M1240 345L1255 420 1230 440M1250 200L1230 280 1240 345" class="road" stroke-width="2.400" />
          <path transform=${T_N} d="M250 225L262 240 250 262ZM110 290L130 300 115 308ZM780 240L800 245 770 250ZM800 320L808 340 796 350ZM880 870L895 880 860 910ZM1145 1060L1155 1120 1145 1140ZM660 1500L670 1520 650 1510ZM600 1000L620 1020 610 1040Z" fill="#6d9bee" />
        </g>
        <g clip-path="url(#china)">
          <rect x="400" y="880" width="160" height="190" fill="#f2eadb" />
          <path transform=${T_NW} d="M20 750H45L40 790 20 800ZM20 840L45 850 50 880 20 900ZM245 750L290 760 265 830 245 780ZM235 840L280 860 270 890ZM235 970L260 965 240 1020ZM130 840L145 820 128 880ZM80 680L125 672 115 700Z" fill="#b9e3c6" />
          <path transform=${T_NW} d="M80 690L110 675 118 720 90 720ZM215 880L270 870 225 920ZM120 1015L150 1065H200L215 1050 150 1040ZM245 1010L258 1020 245 1035Z" fill="#edeef0" />
          <path d=${mesh(405, 900, 540, 1060, 17, 3, 0.6)} fill="none" stroke="#e3d9c3" stroke-width="1.200" />
          <path transform=${T_NW} d="M25 975L60 920 80 850 120 820M25 890L110 880 215 895M50 935L80 950 205 930M25 1010L60 992 130 1000 180 1020 180 1050 215 1050 220 920 270 880 265 775 300 750 170 750M30 720L75 695 110 690" class="road" stroke-width="4" />
        </g>
        <g clip-path="url(#japan)">
          <rect x="1600" y="1180" width="640" height="560" fill="#95d3a6" />
          <path d=${patches(1780, 1330, 2220, 1560, 60, 7, 13)} fill="#8dcd9f" />
          <path transform=${T_SE} d=${LIGHT_SE} fill="#bbe3c8" />
          <path transform=${T_SE} d=${GREY_SE} fill="#e8eaed" />
          <path transform=${T_SE} d=${ROADS_SE} class="road" stroke-width="4" />
        </g>
        <path transform=${T_S} d="M1372 1225L1385 1203 1405 1215 1400 1245 1408 1255 1385 1278 1365 1250ZM1410 1432L1430 1380 1460 1370 1490 1385 1470 1420ZM1525 1345L1560 1315 1568 1350Z" fill="#b9e3c6" />
        <path transform=${T_S} d="M1340 1470L1400 1465 1370 1490 1350 1530M1568 1470L1500 1500M1455 1490L1470 1430 1568 1390" class="road" stroke-width="3.500" />
        <path d="M1786 917l8-4 9 2-1 9-6 5-8-4z" fill="#9bd2a6" stroke="#d9dfb8" stroke-width="1.500" />
        <path transform=${T_N} d=${DASH_N} class="dash" />
        <path transform=${T_S} d=${DASH_S} class="dash" />
        <path transform=${T_SE} d=${DASH_SE} class="dash dash2" />
        <path transform=${T_N} d=${NORTH_BORDER} class="border" />
        <path d="M992 884.500L1008 882 1050 884 1064 876 1080 858 1112 853 1128 864" class="border" />
        ${DOTS.map(([x, y, r]) => svg`<circle cx=${x} cy=${y} r=${r} fill="#fff" stroke="#45494c" stroke-width="2.400" />`)}
        ${LABELS.map(([t, x, y, s, c]) => svg`<text class="lbl ${c}" x=${x} y=${y + s * 0.36} font-size=${s}>${t}</text>`)}
        <text class="google" x="428" y="1713" textLength="94">Google</text>
      </svg>
      ${MARKERS.map((m) => this.marker(m))}
      <div class="filters">
        <div class="filter">전체 상태<i class="caret"></i></div>
        <div class="filter">전체 지역<i class="caret"></i></div>
      </div>
      <div class="controls">
        <div class="ctl"><svg width="26" height="26" viewBox="0 0 26 26" fill="none" stroke="#303336" stroke-width="2"><circle cx="13" cy="13" r="6.500" /><path d="M13 0v8M13 18v8M0 13h8M18 13h8" /></svg></div>
        <div class="ctl zoom">
          <svg width="20" height="20" viewBox="0 0 20 20" stroke="#303336" stroke-width="2"><path d="M10 0v20M0 10h20" /></svg>
          <i class="sep"></i>
          <svg width="20" height="20" viewBox="0 0 20 20" stroke="#303336" stroke-width="2"><path d="M0 10h20" /></svg>
        </div>
      </div>
      <div class="attr"><span>단축키</span><span>지도 데이터 ©2024 Google, TMap Mobility</span><span>약관</span></div>
    `;
  }
}

@customElement("status-donut")
class StatusDonut extends LitElement {
  static styles = css`
    :host { display: grid; width: 214px; height: 214px; }
    .ring, .mid { grid-area: 1 / 1; }
    .mid { display: flex; flex-direction: column; align-items: center; justify-content: center; font-size: 21.8px; line-height: 29px; color: #26292c; }
  `;
  render() {
    const total = STATUS.reduce((s, d) => s + d.count, 0);
    let a = -Math.PI / 2;
    const arcs = [...STATUS].reverse().map((d) => {
      const b = a + (d.count / total) * Math.PI * 2;
      const p = (r: number, t: number) => `${(107 + r * Math.cos(t)).toFixed(2)} ${(107 + r * Math.sin(t)).toFixed(2)}`;
      const path = `M${p(106, a)}A106 106 0 0 1 ${p(106, b)}L${p(52.5, b)}A52.5 52.5 0 0 0 ${p(52.5, a)}Z`;
      a = b;
      return svg`<path d=${path} fill=${d.color} stroke="#8a8f94" stroke-opacity=".45" stroke-width="1" />`;
    });
    return html`<svg class="ring" viewBox="0 0 214 214">${arcs}</svg>
      <div class="mid"><span>전체</span><b>${total} 개</b></div>`;
  }
}

@customElement("app-root")
class AppRoot extends LitElement {
  static styles = css`
    :host { display: flex; width: 3309px; height: 1794px; position: relative; overflow: hidden; background: #f7f7fa; color: #26292c; font-family: "Liberation Sans", "Noto Sans CJK KR", sans-serif; font-size: 22px; line-height: 30px; }
    .ico { display: block; width: 100%; height: 100%; }
    .side { width: 302px; background: #fff; border-right: 2px solid #e9eaec; box-shadow: 1px 0 3px rgba(0,0,0,.05); flex: none; z-index: 2; }
    .logo { display: flex; align-items: center; padding: 27px 0 0 48px; height: 44px; gap: 11px; }
    .word { position: relative; font: 400 41px/44px Inter, sans-serif; letter-spacing: -.3px; color: #25282b; }
    .word b { font-weight: 800; }
    .idot { position: absolute; left: 57px; top: 5px; width: 9px; height: 9px; border-radius: 50%; background: #19ce8b; box-shadow: 0 0 0 1.5px #fff; }
    .toggle { position: absolute; left: 277px; top: 31px; width: 52px; height: 52px; border-radius: 50%; background: #fff; box-shadow: 0 2px 8px rgba(0,0,0,.14); display: flex; align-items: center; justify-content: center; z-index: 3; }
    .nav { padding: 97px 40px 0 32px; display: flex; flex-direction: column; gap: 34px; }
    .item { display: flex; align-items: center; height: 54px; color: #7d8083; font-size: 20.5px; }
    .item .lab { flex: 1; padding-left: 14px; font-weight: 500; }
    .item.on { color: #26292c; } .item.on .lab { font-weight: 700; font-size: 19px; }
    .tile { width: 54px; height: 54px; border-radius: 13px; background: #f4f6f8; display: flex; align-items: center; justify-content: center; }
    .tile .g { width: 22px; height: 22px; margin: 0 2px 2px 0; }
    .on .tile { background: #62eaa6; }
    .plain .tile { background: none; }
    .rule { height: 1px; background: #e8eaec; margin: 20px 20px 0 19px; }
    .nav.plain { padding-top: 20px; }
    .chev { width: 15px; height: 15px; }
    .main { flex: 1; display: flex; flex-direction: column; min-width: 0; }
    .top { height: 128px; background: #fff; border-bottom: 2px solid #e6e7e8; display: flex; align-items: center; justify-content: flex-end; padding: 0 81px 3px 0; box-sizing: border-box; font-size: 25.3px; }
    .bell { width: 30px; height: 30px; margin-right: 32px; }
    .org { height: 55px; line-height: 55px; padding: 0 21px; border-radius: 28px; background: #e7e7e7; margin-right: 31px; color: #36393c; }
    .who b { font-weight: 500; -webkit-text-stroke: .5px #26292c; }
    .time { height: 160px; display: flex; align-items: center; justify-content: flex-end; padding: 38px 135px 0 0; box-sizing: border-box; font-size: 26.6px; color: #3c4043; }
    .q { width: 26px; height: 26px; border-radius: 50%; background: #5f6367; color: #fff; font-weight: 700; font-style: normal; font-size: 19px; line-height: 26px; text-align: center; display: block; }
    .time .q { margin-right: 27px; }
    .refresh { width: 54px; height: 54px; margin-left: 26px; }
    .stats { display: grid; grid-template-columns: 1421px 1422px; gap: 27px; padding-left: 67px; }
    .card { background: #fff; border-radius: 28px; box-sizing: border-box; }
    .stat { height: 321px; padding: 43px 40px 0 41px; }
    .stat.b { padding-top: 40px; }
    .ttl { display: flex; align-items: center; color: #a3a6a9; font-size: 22.6px; height: 30px; }
    .ttl .arr { width: 14px; height: 18px; margin-left: 16px; color: #7e8286; }
    .b .ttl { height: 45px; }
    .period { margin-left: auto; height: 45px; line-height: 45px; border-radius: 23px; padding: 0 16px; background: #e8e8e8; color: #44474a; font-size: 19.8px; }
    .pair { display: grid; grid-template-columns: 691px 1fr; margin-top: 37px; }
    .b .pair { margin-top: 35px; }
    .lab2 { font-size: 25px; line-height: 36px; }
    .val { display: flex; align-items: center; height: 56px; margin-top: 12px; gap: 15px; font-size: 26px; }
    .val b { font-size: 51px; }
    .cmp { display: flex; align-items: center; height: 45px; margin-top: 23px; gap: 14px; font-size: 19px; color: #8b8e92; }
    .delta { height: 45px; border-radius: 23px; padding: 0 14px 0 19px; display: flex; align-items: center; gap: 12px; font-weight: 700; font-size: 20.3px; background: #e8ebff; color: #4262ff; }
    .delta svg { width: 15px; height: 20px; }
    .delta.up { background: #ffe7e8; color: #f8333c; }
    .low { display: grid; grid-template-columns: 2532px 305px; gap: 34px; padding: 34px 0 0 67px; height: 1118px; }
    .big { padding: 52px 40px 0; }
    .big .ttl { height: 36px; } .big .ttl .q { margin-left: 16px; }
    .split { display: flex; gap: 34px; margin-top: 13px; height: 982px; }
    .list { flex: 1; overflow: hidden; display: flex; flex-direction: column; padding-top: 1px; box-sizing: border-box; }
    .search { height: 80px; flex: none; background: #f4f6f8; border-radius: 12px; display: flex; align-items: center; justify-content: space-between; padding: 0 41px; font-size: 25.5px; color: #85888c; }
    .search svg { width: 31px; height: 31px; color: #36393c; }
    .line { flex: none; height: 2px; background: #eceded; margin-top: 33px; }
    .h { font-size: 25.2px; font-weight: 700; line-height: 36px; margin: 32px 0 30px; flex: none; }
    .fav { flex: none; height: 160px; background: #f4f5f7; border-radius: 12px; margin-bottom: 14px; display: flex; align-items: center; padding: 0 23px 0 20px; }
    .fav div { flex: 1; }
    .fav b { display: block; line-height: 36px; font-size: 22.1px; margin-bottom: 12px; }
    .fav p { margin: 0; line-height: 36px; min-height: 36px; font-size: 22.4px; color: #85888c; width: 522px; word-break: break-all; }
    .fav svg { width: 29px; height: 29px; }
    .col { display: flex; flex-direction: column; gap: 34px; }
    .posts { height: 258px; padding: 22px 21px; }
    .posts .val { padding-left: 12px; margin-top: 64px; gap: 14px; font-size: 24px; }
    .posts .ttl, .whole .ttl { white-space: nowrap; }
    .whole { height: 826px; padding: 22px 21px; display: flex; flex-direction: column; }
    .whole status-donut { margin: 90px 0 0 25px; }
    .legend { display: flex; flex-direction: column; gap: 31px; padding: 82px 0 0 32px; }
    .leg { display: flex; align-items: center; font-size: 22.2px; white-space: nowrap; color: #45494c; }
    .leg i { width: 15px; height: 15px; border-radius: 50%; margin-right: 15px; }
    .leg b { margin-left: 10px; color: #26292c; }
    .help { position: absolute; left: 3215px; top: 1703px; width: 67px; height: 67px; border-radius: 50%; background: #fff; box-shadow: 0 3px 14px rgba(0,0,0,.16); font: 700 38px/67px "Liberation Sans", sans-serif; text-align: center; }
  `;

  private navItem(n: { icon: string; label: string; active?: boolean; more?: boolean }) {
    return html`<div class="item ${n.active ? "on" : ""}">
      <span class="tile"><span class="g">${stroke(n.icon)}</span></span>
      <span class="lab">${n.label}</span>
      ${n.more ? html`<span class="chev">${stroke("M1.500 4.500L7.500 10l6-5.500", "0 0 15 15", 2)}</span>` : ""}
    </div>`;
  }

  private cardTitle(t: string) {
    return html`${t}<span class="arr">${stroke("M3 2l7 7-7 7", "0 0 14 18", 2)}</span>`;
  }

  private stat(label: string, v: string, unit: string, base: string, up: boolean) {
    return html`<div>
      <div class="lab2">${label}</div>
      <div class="val"><b>${v}</b><span>${unit}</span></div>
      <div class="cmp">${base}
        <span class="delta ${up ? "up" : ""}">
          <svg viewBox="0 0 15 20" fill="none" stroke="currentColor" stroke-width="1.800"><path d=${up ? "M7.500 20V2M1.500 8l6-6.500 6 6.500" : "M7.500 0v18M1.500 12l6 6.500 6-6.500"} /></svg><span>${v} ${unit}</span>
        </span>
      </div>
    </div>`;
  }

  render() {
    return html`
      <aside class="side">
        <div class="logo">
          <svg width="36" height="36" viewBox="0 0 36 36" fill="#19ce8b">
            <circle cx="18" cy="18" r="7.500" />
            <circle cx="4" cy="18" r="2.800" /><circle cx="32" cy="18" r="2.800" />
            <circle cx="11" cy="6" r="2.800" /><circle cx="25" cy="6" r="2.800" /><circle cx="11" cy="30" r="2.800" /><circle cx="25" cy="30" r="2.800" />
          </svg>
          <div class="word"><b>EVi</b>Hub<i class="idot"></i></div>
        </div>
        <nav class="nav">${NAV.map((n) => this.navItem(n))}</nav>
        <div class="rule"></div>
        <nav class="nav plain">${NAV2.map((n) => this.navItem(n))}</nav>
      </aside>
      <div class="toggle"><svg width="12" height="18" viewBox="0 0 12 18" fill="none" stroke="#222" stroke-width="2"><path d="M10 1.500L2 9l8 7.500" /></svg></div>
      <main class="main">
        <header class="top">
          <span class="bell">${stroke("M12 3a6 6 0 0 0-6 6v4.500L3.500 18h17L18 13.500V9a6 6 0 0 0-6-6zM9.500 18.500a2.500 2.500 0 0 0 5 0")}</span>
          <span class="org">소프트베리</span>
          <span class="who"><b>준승리</b>님</span>
        </header>
        <div class="time">
          <i class="q">?</i>5월 31일 16:43:52
          <svg class="refresh" viewBox="0 0 54 54"><circle cx="27" cy="27" r="27" fill="#2d3033" /><path d="M28 39a12 12 0 1 1 10.500-7" fill="none" stroke="#fff" stroke-width="2.200" /><path d="M32.500 31.500l5.500 5.500 3.500-7.500z" fill="#fff" /></svg>
        </div>
        <section class="stats">
          <div class="card stat">
            <div class="ttl">${this.cardTitle("어제 충전 현황")}</div>
            <div class="pair">${this.stat("충전량", "0", "kWh", "전일대비", false)}${this.stat("매출액", "0", "원", "전일대비", false)}</div>
          </div>
          <div class="card stat b">
            <div class="ttl">${this.cardTitle("이번달 충전 현황")}<span class="period">5월 1일 - 5월 31일</span></div>
            <div class="pair">${this.stat("충전량", "2.85", "kWh", "전월대비", true)}${this.stat("매출액", "922", "원", "전월대비", true)}</div>
          </div>
        </section>
        <section class="low">
          <div class="card big">
            <div class="ttl">충전소별 충전기 현황<i class="q">?</i></div>
            <div class="split">
              <station-map></station-map>
              <div class="list">
                <div class="search">충전소 이름 또는 주소를 검색해보세요.${stroke("M18 10.500a7.500 7.500 0 1 1-15 0 7.500 7.500 0 0 1 15 0zM16 16l6 6", "0 0 24 24", 1.6)}</div>
                <div class="line"></div>
                <div class="h">즐겨찾는 충전소</div>
                ${FAVORITES.map(([a, b]) => html`<div class="fav"><div><b>${a}</b><p>${b}</p></div>
                  <svg viewBox="0 0 29 29"><path d="M14.500 2.500l3.700 7.900 8.300 1.100-6.100 5.900 1.600 8.600-7.500-4.200-7.500 4.200 1.600-8.600-6.100-5.900 8.300-1.100z" fill="#ffb74d" stroke="#ffb74d" stroke-width="2" stroke-linejoin="round" /></svg></div>`)}
              </div>
            </div>
          </div>
          <div class="col">
            <div class="card posts">
              <div class="ttl">${this.cardTitle("총 충전소 게시글")}</div>
              <div class="val"><b>1</b><span>개</span></div>
            </div>
            <div class="card whole">
              <div class="ttl">전체 충전기 상태</div>
              <status-donut></status-donut>
              <div class="legend">${STATUS.map((s) => html`<div class="leg"><i style="background:${s.color}"></i>${s.label}<b>${s.count} 개</b></div>`)}</div>
            </div>
          </div>
        </section>
      </main>
      <div class="help">?</div>
    `;
  }
}
